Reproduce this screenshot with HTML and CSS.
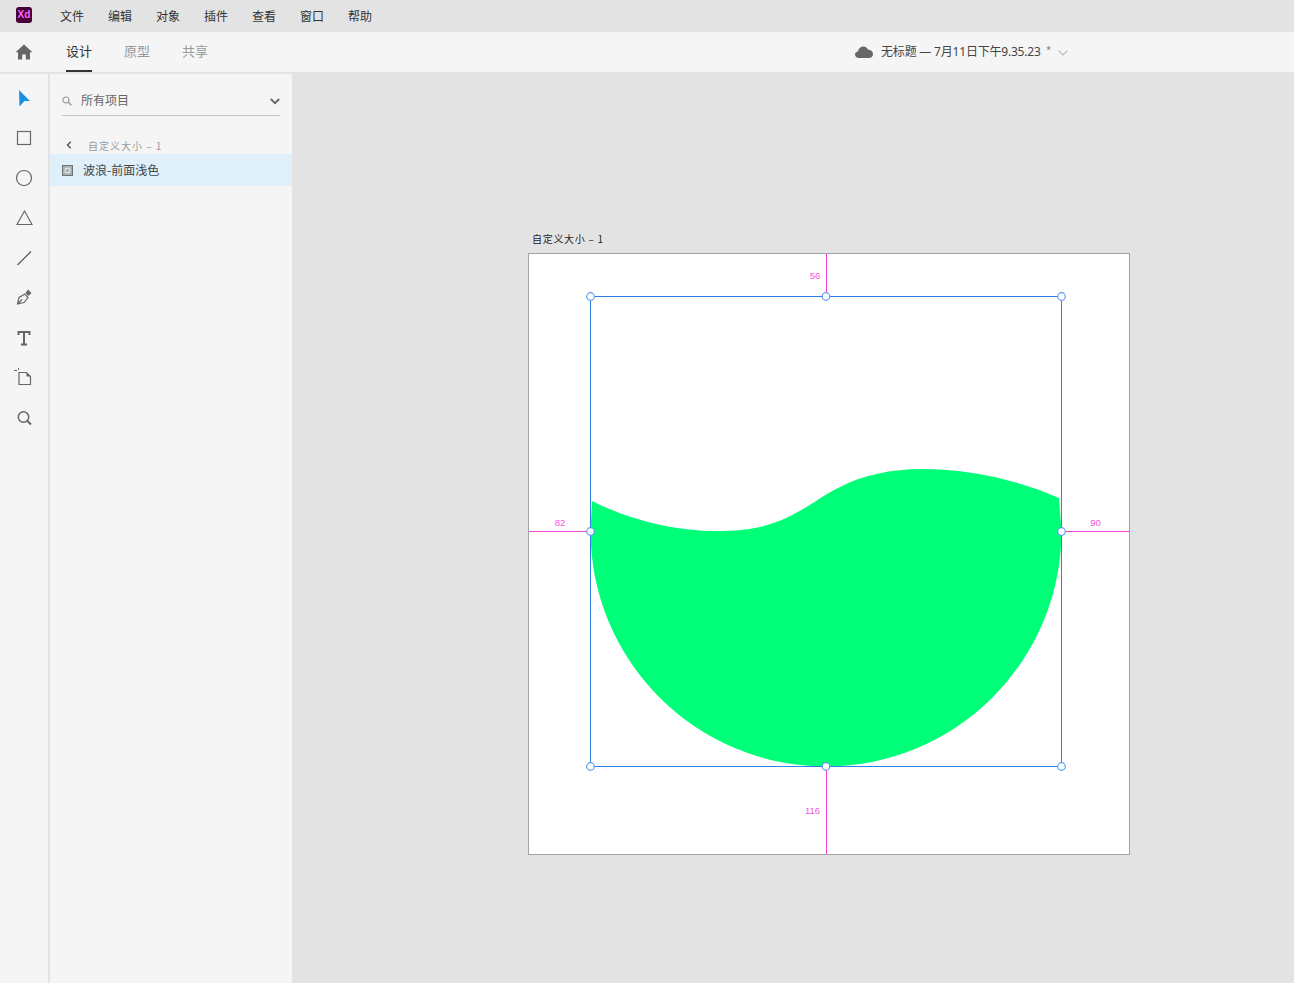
FILE: index.html
```html
<!DOCTYPE html>
<html lang="zh-CN">
<head>
    <meta charset="UTF-8">
    <title>无标题 — Adobe XD</title>
    <link rel="stylesheet" href="styles.css">
</head>
<body>
    <div class="menubar">
        <div class="app-logo">Xd</div>
        <nav class="menu">
            <span>文件</span><span>编辑</span><span>对象</span><span>插件</span><span>查看</span><span>窗口</span><span>帮助</span>
        </nav>
    </div>

    <header class="tabbar">
        <svg class="home-icon" width="18" height="16" viewBox="0 0 18 16"><path d="M9 0.5 L17.5 8.3 L15 8.3 L15 15.5 L10.8 15.5 L10.8 10.5 L7.2 10.5 L7.2 15.5 L3 15.5 L3 8.3 L0.5 8.3 Z" fill="#666"/></svg>
        <div class="tabs">
            <span class="tab active">设计</span>
            <span class="tab">原型</span>
            <span class="tab">共享</span>
        </div>
        <div class="doc-title">
            <svg width="18" height="12" viewBox="0 0 18 12"><path d="M4 12 C1.5 12 0 10.5 0 8.6 C0 6.8 1.3 5.6 3 5.4 C3.4 2.6 5.6 0.5 8.4 0.5 C10.6 0.5 12.4 1.8 13.2 3.8 C15.9 3.8 18 5.6 18 8 C18 10.4 16.2 12 14 12 Z" fill="#666"/></svg>
            <span class="doc-name">无标题 — 7月11日下午9.35.23</span>
            <span class="doc-star">*</span>
            <svg class="doc-caret" width="10" height="6" viewBox="0 0 10 6"><path d="M0.7 0.7 L5 5 L9.3 0.7" fill="none" stroke="#b5b5b5" stroke-width="1.2"/></svg>
        </div>
    </header>

    <div class="workspace">
        <aside class="toolbar">
            <svg class="tool" width="20" height="20" viewBox="0 0 20 20"><path d="M5 2 L16 13 L10.500 13 L5.500 18.500 Z" fill="#1a8fe3"/></svg>
            <svg class="tool" width="20" height="20" viewBox="0 0 20 20"><rect x="3.5" y="3.5" width="13" height="13" fill="none" stroke="#666" stroke-width="1.2"/></svg>
            <svg class="tool" width="20" height="20" viewBox="0 0 20 20"><circle cx="10" cy="10" r="7.5" fill="none" stroke="#666" stroke-width="1.2"/></svg>
            <svg class="tool" width="20" height="20" viewBox="0 0 20 20"><path d="M10.500 3 L18 16.500 L3 16.500 Z" fill="none" stroke="#666" stroke-width="1.1"/></svg>
            <svg class="tool" width="20" height="20" viewBox="0 0 20 20"><path d="M3.500 17 L17 3.500" fill="none" stroke="#555" stroke-width="1.2"/></svg>
            <svg class="tool" width="20" height="20" viewBox="0 0 20 20"><path d="M3.500 16 L5 9.500 L11 6 L14 9.500 L10 14.500 Z M3.500 16 L8 11.500" fill="none" stroke="#666" stroke-width="1.2"/><path d="M11.500 5 L14 1.500 L17.500 5 L14.500 8 Z" fill="#666"/></svg>
            <svg class="tool" width="20" height="20" viewBox="0 0 20 20"><path d="M4.500 7 L4.500 4 L15.500 4 L15.500 7 M10 4 L10 16.500 M7 16.500 L13 16.500" fill="none" stroke="#666" stroke-width="2"/></svg>
            <svg class="tool" width="20" height="20" viewBox="0 0 20 20"><path d="M5 4.500 L12.500 4.500 L16.500 8.500 L16.500 16.500 L5 16.500 Z" fill="none" stroke="#666" stroke-width="1.2"/><path d="M12.500 4.500 L12.500 8.500 L16.500 8.500 Z" fill="#666"/><path d="M0 2.500 L3 2.500 M4.500 0 L4.500 2" stroke="#666" stroke-width="1"/></svg>
            <svg class="tool" width="20" height="20" viewBox="0 0 20 20"><circle cx="9.500" cy="9" r="5.200" fill="none" stroke="#666" stroke-width="1.500"/><path d="M13 12.500 L17 16.500" stroke="#666" stroke-width="2"/></svg>
        </aside>

        <aside class="layers">
            <div class="search">
                <svg width="10" height="10" viewBox="0 0 10 10"><circle cx="4" cy="4" r="3" fill="none" stroke="#999" stroke-width="1.2"/><path d="M6.3 6.3 L9.3 9.3" stroke="#999" stroke-width="1.4"/></svg>
                <span class="search-text">所有项目</span>
                <svg class="search-caret" width="10" height="7" viewBox="0 0 10 7"><path d="M0.8 1 L5 5.2 L9.2 1" fill="none" stroke="#666" stroke-width="1.8"/></svg>
            </div>
            <div class="crumb">
                <svg width="6" height="8" viewBox="0 0 6 8"><path d="M4.8 0.8 L1.5 4 L4.8 7.2" fill="none" stroke="#555" stroke-width="1.4"/></svg>
                <span>自定义大小 – 1</span>
            </div>
            <div class="layer-row">
                <svg width="11" height="11" viewBox="0 0 11 11"><rect width="11" height="11" fill="#6f7377"/><rect x="1" y="1" width="9" height="9" fill="#a9afb3"/><circle cx="5.5" cy="5.5" r="3" fill="#e3e8eb"/><circle cx="5.500" cy="5.500" r="1.800" fill="#a9afb3"/></svg>
                <span>波浪-前面浅色</span>
            </div>
        </aside>

        <main class="canvas">
            <div class="artboard-label">自定义大小 – 1</div>
            <svg class="stage" width="1002" height="909" viewBox="292 74 1002 909">
                <rect x="528.5" y="253.5" width="601" height="601" fill="#fff" stroke="#a3a3a3"/>
                <path d="M592 501 C632 521 676 531 716 531 C750 531 772 526 794 514 C810 506 822 496 838 488 C862 475 892 469 922 469 C970 469 1018 480 1059 498 L1061.5 531 A235.5 235.5 0 0 1 590.5 531 Z" fill="#00ff78"/>
                <path d="M826.5 254 V296 M826.5 767 V854 M529 531.5 H590 M1062 531.5 H1129" stroke="#f23fd6" fill="none"/>
                <rect x="590.5" y="296.5" width="471" height="470" fill="none" stroke="#2d82e8"/>
                <g fill="#fff" stroke="#5b9bf0" stroke-width="1.2">
                    <circle cx="590.5" cy="296.5" r="3.8"/>
                    <circle cx="826" cy="296.5" r="3.8"/>
                    <circle cx="1061.5" cy="296.5" r="3.8"/>
                    <circle cx="590.5" cy="531.5" r="3.8"/>
                    <circle cx="1061.5" cy="531.5" r="3.8"/>
                    <circle cx="590.5" cy="766.5" r="3.8"/>
                    <circle cx="826" cy="766.5" r="3.8"/>
                    <circle cx="1061.5" cy="766.5" r="3.8"/>
                </g>
                <g class="measure">
                    <text x="815" y="279">56</text>
                    <text x="560" y="526">82</text>
                    <text x="1095.500" y="526">90</text>
                    <text x="812.500" y="814">116</text>
                </g>
            </svg>
        </main>
    </div>
</body>
</html>
```

FILE: styles.css
```css
html, body {
    height: 100%;
}

body {
    margin: 0;
    display: flex;
    flex-direction: column;
    overflow: hidden;
    background-color: #e3e3e3;
    color: #333;
    font-family: "Noto Sans CJK SC", "Noto Sans", sans-serif;
    font-size: 12px;
}

.menubar {
    height: 32px;
    flex: none;
    display: flex;
    align-items: center;
    background-color: #e3e3e3;
}

.app-logo {
    width: 16px;
    height: 16px;
    margin: -3px 0 0 16px;
    border-radius: 3px;
    background-color: #470137;
    color: #ff61f6;
    font-family: "Liberation Sans", sans-serif;
    font-size: 10px;
    font-weight: bold;
    line-height: 16px;
    text-align: center;
}

.menu {
    display: flex;
    gap: 24px;
    margin: -2px 0 0 28px;
}

.tabbar {
    height: 40px;
    flex: none;
    display: flex;
    align-items: center;
    background-color: #f5f5f5;
    border-bottom: 2px solid #e3e3e3;
}

.home-icon {
    margin-left: 15px;
}

.tabs {
    display: flex;
    gap: 32px;
    height: 40px;
    margin-left: 33px;
}

.tab {
    height: 40px;
    box-sizing: border-box;
    color: #999;
    font-size: 13px;
    line-height: 38px;
}

.tab.active {
    color: #333;
    border-bottom: 2px solid #333;
}

.doc-title {
    display: flex;
    align-items: center;
    margin-left: 647px;
}

.doc-name {
    margin: -3px 0 0 8px;
    color: #444;
    font-family: "Noto Sans", "Noto Sans CJK SC", sans-serif;
    letter-spacing: -0.2px;
}

.doc-star {
    margin: -3px 7px 0 5px;
    color: #888;
}

.doc-caret {
    margin-top: 2px;
}

.workspace {
    flex: 1;
    display: flex;
    min-height: 0;
}

.toolbar {
    width: 48px;
    flex: none;
    display: flex;
    flex-direction: column;
    align-items: center;
    gap: 20px;
    padding-top: 14px;
    background-color: #f5f5f5;
    border-right: 2px solid #e3e3e3;
}

.tool {
    flex: none;
}

.layers {
    width: 242px;
    flex: none;
    background-color: #f5f5f5;
}

.search {
    display: flex;
    align-items: center;
    height: 28px;
    margin: 13px 12px 0;
    border-bottom: 1px solid #c8c8c8;
}

.search-text {
    margin: -3px 0 0 9px;
    color: #666;
}

.search-caret {
    margin-left: auto;
}

.crumb {
    display: flex;
    align-items: center;
    height: 20px;
    margin-top: 19px;
    padding-left: 16px;
    color: #999;
    font-size: 10px;
    letter-spacing: 1px;
}

.crumb span {
    margin-left: 16px;
}

.layer-row {
    display: flex;
    align-items: center;
    height: 32px;
    margin-top: -1px;
    padding-left: 12px;
    background-color: #dff0fa;
    color: #444;
}

.layer-row span {
    margin: -2px 0 0 10px;
}

.canvas {
    position: relative;
    flex: 1;
    min-width: 0;
    background-color: #e3e3e3;
}

.stage {
    position: absolute;
    left: 0;
    top: 0;
}

.artboard-label {
    position: absolute;
    z-index: 1;
    left: 240px;
    top: 157px;
    color: #222;
    font-size: 10px;
    letter-spacing: 0.7px;
    line-height: 16px;
}

.measure text {
    fill: #f552dc;
    font-family: "Liberation Sans", sans-serif;
    font-size: 9.500px;
    text-anchor: middle;
}
```
